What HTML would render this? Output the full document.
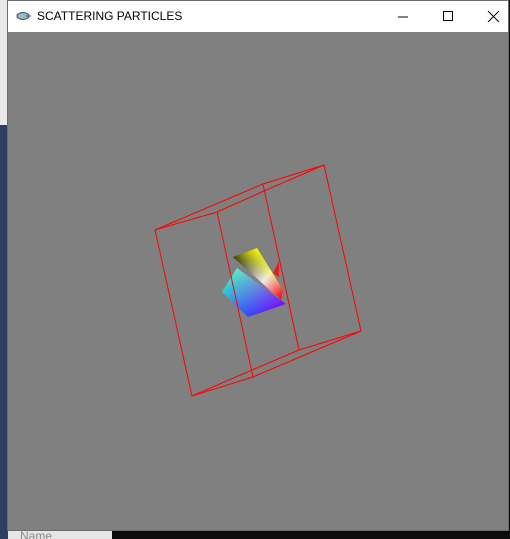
<!DOCTYPE html>
<html><head><meta charset="utf-8"><style>
html,body{margin:0;padding:0;width:510px;height:539px;overflow:hidden;background:#0c0c0c;font-family:"Liberation Sans",sans-serif}
.leftbg{position:absolute;left:0;top:0;width:8px;height:539px;background:#2c3f5c}
.leftbg2{position:absolute;left:0;top:0;width:8px;height:125px;background:#e8e8e8}
.namebox{position:absolute;left:8px;top:531px;width:104px;height:8px;background:#e6e6e6;overflow:hidden}
.namebox span{position:absolute;left:12px;top:-2px;font-size:12px;color:#888}
.win{position:absolute;left:7px;top:0;width:502px;height:531px;background:#808080;border:1px solid #6c6c6c;box-sizing:border-box}
.title{position:absolute;left:0;top:0;width:100%;height:31px;background:#fff}
.title .t{position:absolute;left:29px;top:8px;font-size:12px;color:#000}
</style></head><body>
<div class="leftbg"></div><div class="leftbg2"></div>
<div class="namebox"><span>Name</span></div>
<div class="win">
<div class="title">
<svg style="position:absolute;left:8px;top:10px" width="16" height="10"><ellipse cx="7" cy="5" rx="6" ry="3.5" fill="#9bb" stroke="#357" stroke-width="1"/><line x1="10" y1="5" x2="15" y2="5" stroke="#357"/></svg>
<span class="t">SCATTERING PARTICLES</span>
<svg style="position:absolute;left:380px;top:8px" width="120" height="16">
<line x1="10" y1="8" x2="20" y2="8" stroke="#000"/>
<rect x="55.5" y="2.5" width="9" height="9" fill="none" stroke="#000"/>
<path d="M100 2 L111 13 M111 2 L100 13" stroke="#000"/>
</svg>
</div>
</div>
<svg style="position:absolute;left:0;top:0" width="510" height="539">
<defs>
<linearGradient id="g1" x1="222" y1="292" x2="286" y2="304" gradientUnits="userSpaceOnUse"><stop offset="0" stop-color="#0ff"/><stop offset="0.5" stop-color="#88f"/><stop offset="1" stop-color="#f0f"/></linearGradient>
<linearGradient id="g1b" x1="237" y1="268" x2="248" y2="317" gradientUnits="userSpaceOnUse"><stop offset="0" stop-color="#8f8" stop-opacity="0.9"/><stop offset="1" stop-color="#00f" stop-opacity="0.9"/></linearGradient>
<linearGradient id="g2" x1="233" y1="257" x2="283" y2="298" gradientUnits="userSpaceOnUse"><stop offset="0" stop-color="#000"/><stop offset="0.6" stop-color="#eee"/><stop offset="1" stop-color="#f00"/></linearGradient>
<linearGradient id="g2b" x1="257" y1="248" x2="245" y2="270" gradientUnits="userSpaceOnUse"><stop offset="0" stop-color="#ff0"/><stop offset="1" stop-color="#ff0" stop-opacity="0"/></linearGradient>
</defs>
<polygon points="279,261 273,273 279,277" fill="#d22"/>
<polygon points="222,292 237,268 286,304 248,317" fill="url(#g1)"/>
<polygon points="222,292 237,268 286,304 248,317" fill="url(#g1b)" opacity="0.6"/>
<polygon points="233,257 257,248 283,290 281,300" fill="url(#g2)"/>
<polygon points="233,257 257,248 283,290 281,300" fill="url(#g2b)"/>
<g fill="none" stroke="#f00" stroke-width="1">
<polyline points="155,230 217,212 264,191 324,165"/>
<polyline points="155,230 263,184 324,165"/>
<polyline points="155,230 192,396"/>
<polyline points="324,165 361,331"/>
<polyline points="217,212 253,377"/>
<polyline points="263,184 299,350"/>
<polyline points="192,396 252,370 299,350 361,331"/>
<polyline points="192,396 253,377 361,331"/>
</g>
</svg>
</body></html>
